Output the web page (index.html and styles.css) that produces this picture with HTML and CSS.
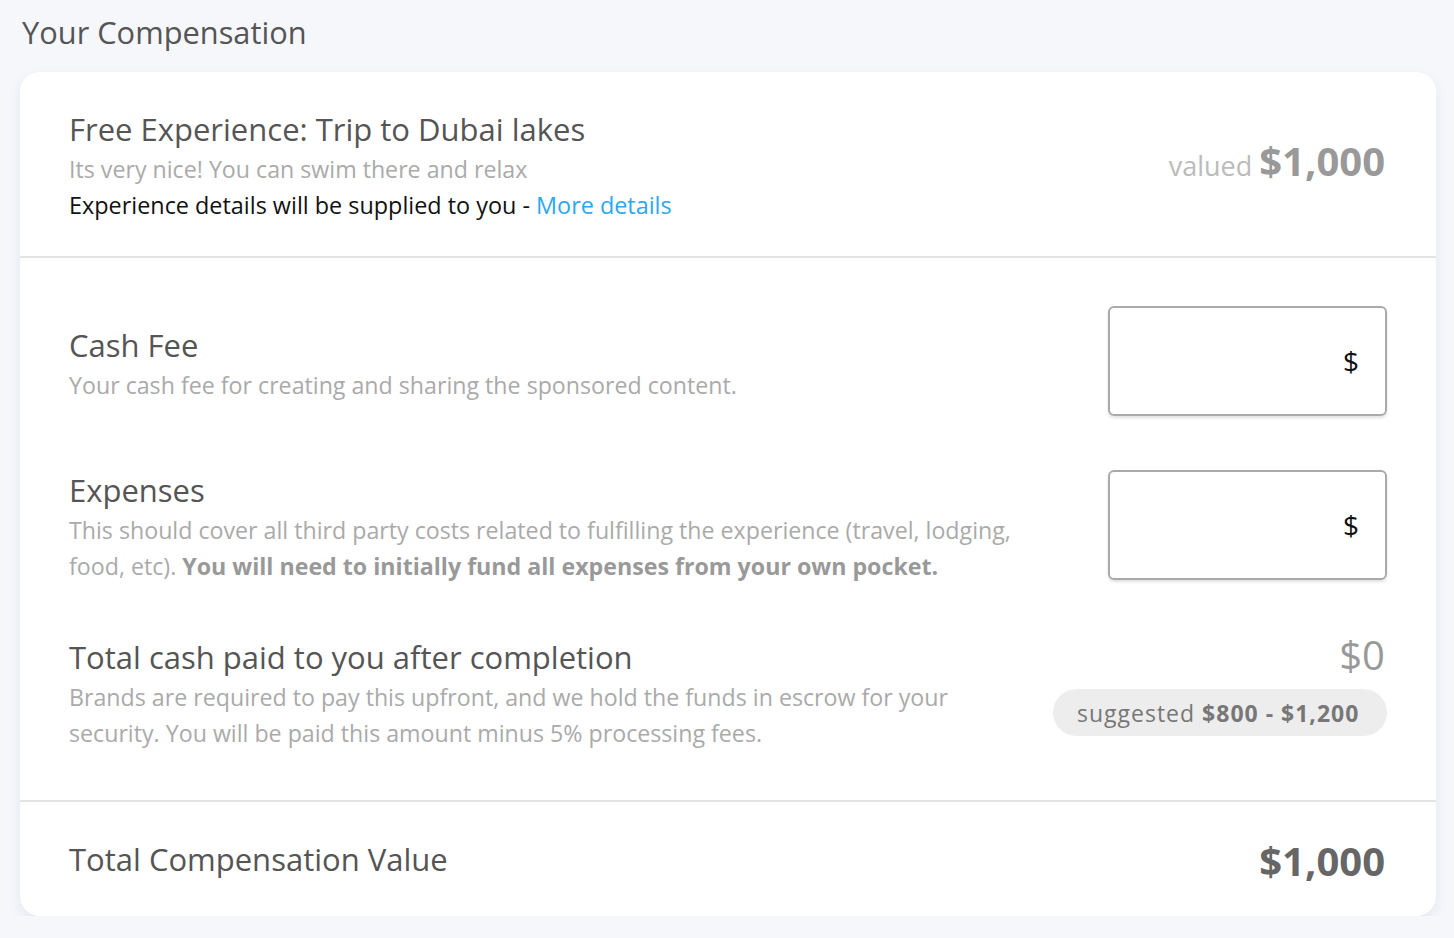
FILE: index.html
```html
<!DOCTYPE html>
<html>
<head>
<meta charset="utf-8">
<link rel="stylesheet" href="styles.css">
</head>
<body>
<div class="page">
  <h1 class="page-title">Your Compensation</h1>
  <div class="card">
    <section class="sec sec-exp">
      <div class="sec-main">
        <h2 class="heading">Free Experience: Trip to Dubai lakes</h2>
        <p class="desc">Its very nice! You can swim there and relax</p>
        <p class="note">Experience details will be supplied to you - <a class="link" href="#">More details</a></p>
      </div>
      <div class="valued"><span class="valued-label">valued</span> <span class="valued-amt">$1,000</span></div>
    </section>
    <section class="sec sec-fields">
      <div class="row row-cash">
        <div class="sec-main">
          <h2 class="heading">Cash Fee</h2>
          <p class="desc">Your cash fee for creating and sharing the sponsored content.</p>
        </div>
        <div class="input-box"><span class="cur">$</span></div>
      </div>
      <div class="row row-exp">
        <div class="sec-main narrow">
          <h2 class="heading">Expenses</h2>
          <p class="desc">This should cover all third party costs related to fulfilling the experience (travel, lodging, food, etc). <b>You will need to initially fund all expenses from your own pocket.</b></p>
        </div>
        <div class="input-box"><span class="cur">$</span></div>
      </div>
      <div class="row row-total">
        <div class="sec-main narrow2">
          <h2 class="heading">Total cash paid to you after completion</h2>
          <p class="desc">Brands are required to pay this upfront, and we hold the funds in escrow for your security. You will be paid this amount minus 5% processing fees.</p>
        </div>
        <div class="total-side">
          <div class="zero">$0</div>
          <div class="pill">suggested <b>$800 - $1,200</b></div>
        </div>
      </div>
    </section>
    <section class="sec sec-sum">
      <h2 class="heading">Total Compensation Value</h2>
      <div class="sum-amt">$1,000</div>
    </section>
  </div>
</div>
</body>
</html>
```
FILE: styles.css
```css
* { box-sizing: border-box; }
html, body { margin: 0; padding: 0; }
body {
  background: #f6f7fb;
  font-family: "Open Sans", "Noto Sans", sans-serif;
  color: #555;
}
.page { padding: 13px 18px 0 20px; }
.page-title {
  margin: 0 0 21px 2px;
  font-size: 30.8px;
  font-weight: 400;
  color: #555;
  line-height: 38px;
}
.card {
  background: #fff;
  border-radius: 20px;
  box-shadow: 0 6px 14px rgba(40, 50, 90, 0.08);
  width: 1416px;
}
.sec { padding: 0 51px 0 49px; }
.sec-exp {
  display: flex;
  justify-content: space-between;
  align-items: flex-start;
  height: 186px;
  border-bottom: 2px solid #e2e2e2;
  padding-top: 37px;
}
.heading {
  margin: 0 0 2px;
  font-weight: 400;
  font-size: 31px;
  line-height: 40px;
  color: #555;
}
.desc {
  margin: 0;
  font-size: 23.2px;
  line-height: 36px;
  color: #aaa;
}
.desc b { color: #999; font-weight: 700; line-height: 36px; }
.note {
  margin: 0;
  font-size: 23.4px;
  line-height: 36px;
  color: #111;
}
.link { color: #2aa8f2; text-decoration: none; }
.valued { color: #bbb; font-size: 27px; line-height: 44px; margin-top: 30px; }
.valued-amt { color: #999; font-weight: 700; font-size: 40px; }
.sec-fields { padding-top: 48px; padding-bottom: 49px; border-bottom: 2px solid #e2e2e2; }
.row { display: flex; justify-content: space-between; align-items: flex-start; }
.row-cash { height: 110px; }
.row-cash .sec-main { padding-top: 19px; }
.row-exp { height: 110px; margin-top: 54px; }
.row-total { margin-top: 57px; }
.narrow { width: 980px; }
.narrow2 { width: 900px; }
.input-box {
  width: 279px;
  height: 110px;
  border: 2px solid #aaa;
  border-radius: 6px;
  box-shadow: 0 2px 3px rgba(0,0,0,0.12);
  margin-right: -2px;
  display: flex;
  align-items: center;
  justify-content: flex-end;
  padding-right: 26px;
}
.cur { color: #111; font-size: 28px; }
.total-side { display: flex; flex-direction: column; align-items: flex-end; margin-right: -2px; }
.zero { font-size: 40px; color: #999; line-height: 44px; margin-right: 2px; margin-top: -4px; }
.pill {
  margin-top: 12px;
  background: #ededed;
  border-radius: 24px;
  height: 47px;
  padding: 0 24px;
  display: flex;
  align-items: center;
  font-size: 23px;
  color: #777;
  width: 334px;
  letter-spacing: 1px;
  white-space: nowrap;
}
.pill b { margin-left: 7px; color: #777; }
.sec-sum {
  display: flex;
  justify-content: space-between;
  align-items: center;
  height: 114px;
  padding-top: 2px;
}
.sum-amt { font-size: 40px; font-weight: 700; color: #666; }
```
